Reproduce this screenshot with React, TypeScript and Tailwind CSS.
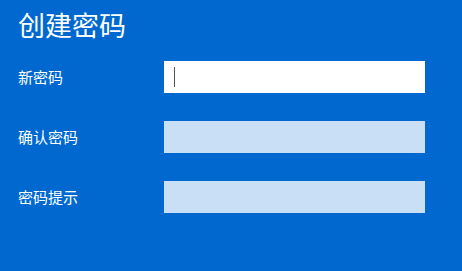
import React from "react";

const font = { fontFamily: '"Noto Sans CJK SC", "Noto Sans", sans-serif' };

export default function App() {
  return (
    <div
      className="w-[462px] h-[271px] bg-[#0068cf] pl-[18px] text-white overflow-hidden"
      style={font}
    >
      <h1 className="h-[50px] text-[27px] leading-[50px] font-normal">创建密码</h1>
      <div className="mt-[11px] grid grid-cols-[146px_261px] gap-y-[28px] items-center">
        <div className="text-[15px] leading-[20px]">新密码</div>
        <div className="h-[32px] bg-white flex items-center pl-[10px]">
          <span className="block w-px h-[20px] bg-[#555]" />
        </div>
        <div className="text-[15px] leading-[20px]">确认密码</div>
        <div className="h-[32px] bg-[#c9dff6]" />
        <div className="text-[15px] leading-[20px]">密码提示</div>
        <div className="h-[32px] bg-[#c9dff6]" />
      </div>
    </div>
  );
}
